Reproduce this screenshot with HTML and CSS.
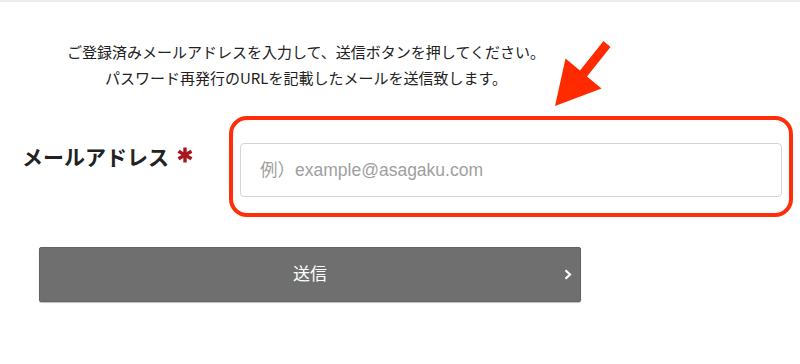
FILE: index.html
```html
<!DOCTYPE html>
<html lang="ja">
<head>
<meta charset="utf-8">
<link rel="stylesheet" href="styles.css">
</head>
<body>
<div class="page">
  <div class="topbar"></div>
  <div class="intro">
    <p>ご登録済みメールアドレスを入力して、送信ボタンを押してください。</p>
    <p>パスワード再発行のURLを記載したメールを送信致します。</p>
  </div>
  <div class="row">
    <div class="label">メールアドレス<svg class="req" viewBox="0 0 16 16" width="16" height="16"><g stroke="#a8151c" stroke-width="3.4" stroke-linecap="butt"><line x1="8" y1="0.5" x2="8" y2="15.5"/><line x1="1.5" y1="4.2" x2="14.5" y2="11.8"/><line x1="1.5" y1="11.8" x2="14.5" y2="4.2"/></g></svg></div>
    <div class="field">
      <input class="input" type="text" placeholder="例）example@asagaku.com">
    </div>
  </div>
  <button class="submit"><span class="submit-text">送信</span><svg class="chev" viewBox="0 0 8 11" width="8" height="11"><polyline points="1.5,1.2 6,5.5 1.5,9.8" fill="none" stroke="#fff" stroke-width="2.2"/></svg></button>
  <svg class="arrow" viewBox="0 0 80 90" width="80" height="90"><polygon fill="#ff2a00" points="63.5,11.1 70.5,16.9 47,46.4 61.5,58.5 15,76 25.5,28.5 40,40.6"/></svg>
</div>
</body>
</html>
```

FILE: styles.css
```css
html, body {
  margin: 0;
  padding: 0;
  background: #fff;
}
body {
  font-family: "Noto Sans CJK JP", "Noto Sans", sans-serif;
  color: #222;
}
.page {
  position: relative;
  width: 800px;
  height: 364px;
  overflow: hidden;
}
.topbar {
  height: 2px;
  background: #ececec;
}
.intro {
  width: 612px;
  margin-top: 37px;
  text-align: center;
  font-size: 15px;
  line-height: 26px;
}
.intro p {
  margin: 0;
}
.row {
  display: flex;
  align-items: flex-start;
  margin-top: 25px;
  padding-left: 22px;
}
.label {
  width: 207px;
  margin-top: 26px;
  font-size: 21px;
  line-height: 28px;
  font-weight: bold;
  color: #222;
  display: flex;
  align-items: center;
}
.req {
  margin-left: 8px;
  margin-top: -2px;
}
.field {
  box-sizing: border-box;
  width: 564px;
  border: 4px solid #ff2d0a;
  border-radius: 18px;
  padding: 23px 7px 16px 7px;
}
.input {
  display: block;
  box-sizing: border-box;
  width: 100%;
  height: 54px;
  border: 1px solid #d4d4d4;
  border-radius: 4px;
  padding: 0 0 0 19px;
  font-family: "Liberation Sans", "Noto Sans CJK JP", sans-serif;
  font-size: 17.5px;
  color: #333;
  background: #fff;
  outline: none;
}
.input::placeholder {
  color: #a0a0a0;
}
.submit {
  display: flex;
  align-items: center;
  justify-content: center;
  position: relative;
  box-sizing: border-box;
  margin: 30px 0 0 39px;
  width: 542px;
  height: 55px;
  background: #6f6f6f;
  border: 1px solid #626262;
  border-radius: 2px;
  box-shadow: 0 1px 1px rgba(0, 0, 0, 0.25);
  color: #fff;
  font-family: "Noto Sans CJK JP", "Noto Sans", sans-serif;
  font-size: 17px;
  line-height: 24px;
  padding: 0 0 4px 0;
}
.chev {
  position: absolute;
  right: 8px;
  top: 21px;
}
.arrow {
  position: absolute;
  left: 540px;
  top: 30px;
}
```
